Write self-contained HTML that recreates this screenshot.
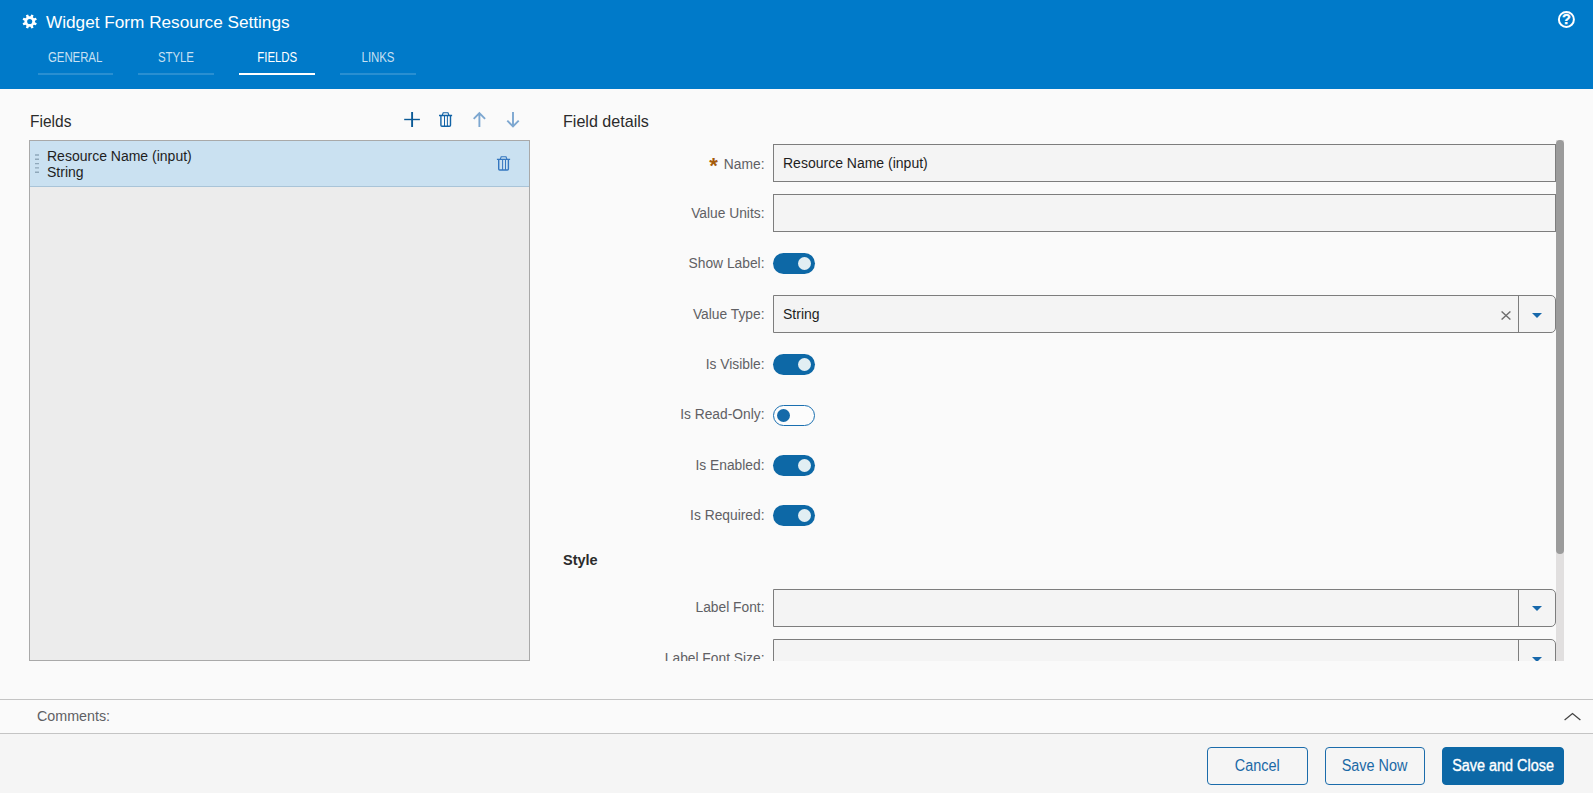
<!DOCTYPE html>
<html><head><meta charset="utf-8"><title>Widget Form Resource Settings</title>
<style>
*{box-sizing:border-box;margin:0;padding:0}
html,body{width:1593px;height:793px;overflow:hidden;background:#fafafa;font-family:"Liberation Sans",sans-serif;color:#232323}
.abs{position:absolute}
#hdr{position:absolute;left:0;top:0;width:1593px;height:89px;background:#007ac9}
#title{position:absolute;left:46px;top:11px;font-size:17.2px;color:#fff;white-space:nowrap;line-height:22px}
.tab{position:absolute;top:47px;width:75px;height:28px;border-bottom:2px solid rgba(255,255,255,.16);color:rgba(255,255,255,.78);font-size:14px;text-align:center;line-height:20px;white-space:nowrap}
.tab span{display:inline-block;transform:scaleX(.82);transform-origin:50% 50%;letter-spacing:-.1px}
.tab.on{border-bottom-color:#fff;color:#fff}
.h{position:absolute;font-size:16.6px;color:#2b2b2b;white-space:nowrap;line-height:20px;transform-origin:0 50%}
#list{position:absolute;left:29px;top:140px;width:501px;height:521px;border:1px solid #a9a9a9;background:#ececec}
#item{position:absolute;left:0;top:0;width:499px;height:46px;background:#cae1f1;border-bottom:1px solid #a9c4d8}
#item .t{position:absolute;left:17px;top:7px;font-size:14px;line-height:16px;color:#1e1e1e;white-space:nowrap}
.lbl{position:absolute;right:828.5px;font-size:13.8px;color:#606064;white-space:nowrap;line-height:18px;text-align:right}
.inp{position:absolute;left:773px;width:783px;height:38px;border:1px solid #7d7d7d;background:#f4f4f4;font-size:14px;line-height:36px;padding-left:9px;color:#1e1e1e;white-space:nowrap}
.dd{border-radius:0 5px 5px 0}
.dd .btn{position:absolute;right:0;top:0;width:37px;height:36px;border-left:1px solid #7d7d7d}
.dd .btn:after{content:"";position:absolute;left:13px;top:17px;border-left:5px solid transparent;border-right:5px solid transparent;border-top:5.5px solid #1768ab}
.dd.lo .btn:after{top:16px}
.tg{position:absolute;left:773px;width:42px;height:21px;border-radius:11px;background:#0d68a6}
.tg i{position:absolute;left:25px;top:4px;width:13px;height:13px;border-radius:50%;background:#e1eef3}
.tg.off{background:#fcfcfc;border:1px solid #1a6fb0}
.tg.off i{left:3px;top:3px;background:#156aa9}
#clip{position:absolute;left:540px;top:100px;width:1030px;height:561px;overflow:hidden}
#clip>div{position:absolute;left:-540px;top:-100px;width:1593px;height:800px}
#cm{position:absolute;left:0;top:699px;width:1593px;height:35px;border-top:1px solid #c4c4c4;border-bottom:1px solid #c4c4c4;background:#fafafa}
#cm span{position:absolute;left:37px;top:8px;font-size:14.3px;color:#606064;line-height:16px}
#ft{position:absolute;left:0;top:734px;width:1593px;height:59px;background:#f5f5f5}
.b{position:absolute;top:13px;height:38px;border:1px solid #1b6cab;border-radius:4px;color:#1b69a6;font-size:15.6px;line-height:36px;text-align:center;white-space:nowrap}
.b span{display:inline-block;transform:scaleX(.925)}
.b.p{background:#0d68a6;color:#fff;border-color:#0d68a6;-webkit-text-stroke:.35px #fff}
</style></head><body>
<div id="hdr">
<svg class="abs" style="left:22px;top:14px" width="16" height="15" viewBox="0 0 16 15"><path fill="#fff" fill-rule="evenodd" d="M12.94 8.28 L14.81 9.14 L13.89 11.37 L11.96 10.65 L10.85 11.76 L11.57 13.69 L9.34 14.61 L8.48 12.74 L6.92 12.74 L6.06 14.61 L3.83 13.69 L4.55 11.76 L3.44 10.65 L1.51 11.37 L0.59 9.14 L2.46 8.28 L2.46 6.72 L0.59 5.86 L1.51 3.63 L3.44 4.35 L4.55 3.24 L3.83 1.31 L6.06 0.39 L6.92 2.26 L8.48 2.26 L9.34 0.39 L11.57 1.31 L10.85 3.24 L11.96 4.35 L13.89 3.63 L14.81 5.86 L12.94 6.72Z M5.15 7.50a2.55 2.55 0 1 0 5.10 0a2.55 2.55 0 1 0 -5.10 0Z"/></svg>
<div id="title">Widget Form Resource Settings</div>
<div class="tab" style="left:38px"><span>GENERAL</span></div>
<div class="tab" style="left:138px;width:76px"><span>STYLE</span></div>
<div class="tab on" style="left:239px;width:76px"><span>FIELDS</span></div>
<div class="tab" style="left:340px;width:76px"><span>LINKS</span></div>
<svg class="abs" style="left:1557px;top:10px" width="19" height="19" viewBox="0 0 19 19"><circle cx="9.400" cy="9.400" r="7.500" fill="none" stroke="#fff" stroke-width="2"/><text x="9.500" y="14.300" style="font-family:'Liberation Sans',sans-serif;font-weight:bold;font-size:14.500px" fill="#fff" stroke="#fff" stroke-width=".3" text-anchor="middle">?</text></svg>
</div>
<div class="h" style="left:29.5px;top:112px;transform:scaleX(.935)">Fields</div>
<svg class="abs" style="left:400px;top:108px" width="130" height="24" viewBox="0 0 130 24" fill="none">
<path d="M12.100 4v15" stroke="#0b5a96" stroke-width="1.900"/><path d="M4.200 11.500h15.700" stroke="#0b5a96" stroke-width="1.400"/>
<g stroke="#1263a6" stroke-width="1.400"><path d="M39 7.500H52.100M40.900 8V17.200Q40.900 18.300 42 18.300H49.400Q50.500 18.300 50.500 17.200V8"/><path d="M42.300 7.200L43.200 4.800H48L48.900 7.200" stroke-width="1.100"/><path d="M44.500 8V18M47.400 8V18" stroke-width="1"/></g>
<g stroke="#7da7d0" stroke-width="1.900"><path d="M79.400 18.900V5.200M73.700 10.800L79.400 5.100 85.100 10.800"/><path d="M113 4V18.200M107.300 12.600L113 18.300 118.700 12.600"/></g>
</svg>
<div id="list"><div id="item">
<svg class="abs" style="left:4px;top:12px" width="6" height="22" viewBox="0 0 6 22"><path d="M1 2h4M1 6.300h4M1 10.600h4M1 14.900h4M1 19.200h4" stroke="#8fa8ba" stroke-width="1.400"/></svg>
<div class="t">Resource Name (input)<br>String</div>
<svg class="abs" style="left:466px;top:14px" width="16" height="18" viewBox="0 0 16 18" fill="none" stroke="#3577c0" stroke-width="1.400"><path d="M.9 4.400H14.100M2.700 5V13.900Q2.700 15 3.800 15H11.300Q12.400 15 12.400 13.900V5"/><path d="M4.300 4.100L5.200 1.700H10L10.900 4.100" stroke-width="1.100"/><path d="M6.600 5V15M9.500 5V15" stroke-width="1"/></svg>
</div></div>
<div class="h" style="left:563px;top:112px;transform:scaleX(.97)">Field details</div>
<div id="clip"><div>
<div class="lbl" style="top:156px"><span style="color:#a55a0a;font-size:22px;line-height:10px;position:relative;top:4px;margin-right:6px;font-weight:bold">*</span>Name:</div>
<div class="inp" style="top:144px">Resource Name (input)</div>
<div class="lbl" style="top:205px">Value Units:</div>
<div class="inp" style="top:194px"></div>
<div class="lbl" style="top:255px">Show Label:</div>
<div class="tg" style="top:253px"><i></i></div>
<div class="lbl" style="top:306px">Value Type:</div>
<div class="inp dd" style="top:295px">String<span class="btn"></span>
<svg class="abs" style="left:727px;top:14.5px" width="10" height="9" viewBox="0 0 10 9"><path d="M.6.400l8.800 8.200M9.400.400L.6 8.600" stroke="#6e6e6e" stroke-width="1.300"/></svg></div>
<div class="lbl" style="top:356px">Is Visible:</div>
<div class="tg" style="top:354px"><i></i></div>
<div class="lbl" style="top:406px">Is Read-Only:</div>
<div class="tg off" style="top:405px"><i></i></div>
<div class="lbl" style="top:457px">Is Enabled:</div>
<div class="tg" style="top:455px"><i></i></div>
<div class="lbl" style="top:507px">Is Required:</div>
<div class="tg" style="top:505px"><i></i></div>
<div class="abs" style="left:563px;top:551px;font-size:14.5px;font-weight:bold;color:#2b2b2b;line-height:18px">Style</div>
<div class="lbl" style="top:599px">Label Font:</div>
<div class="inp dd lo" style="top:589px"><span class="btn"></span></div>
<div class="lbl" style="top:650px">Label Font Size:</div>
<div class="inp dd" style="top:639px"><span class="btn"></span></div>
<div class="abs" style="left:1556px;top:140px;width:8px;height:530px;background:#e1dfdf"></div>
<div class="abs" style="left:1556px;top:140px;width:8px;height:414px;background:#9b9b9b;border-radius:4px"></div>
</div></div>
<div id="cm"><span>Comments:</span>
<svg class="abs" style="left:1563px;top:11px" width="19" height="11" viewBox="0 0 19 11"><path d="M1.600 9l7.900-6.400 7.900 6.400" fill="none" stroke="#444" stroke-width="1.300"/></svg></div>
<div id="ft">
<div class="b" style="left:1207px;width:101px"><span>Cancel</span></div>
<div class="b" style="left:1325px;width:100px"><span>Save Now</span></div>
<div class="b p" style="left:1442px;width:122px"><span>Save and Close</span></div>
</div>
</body></html>
